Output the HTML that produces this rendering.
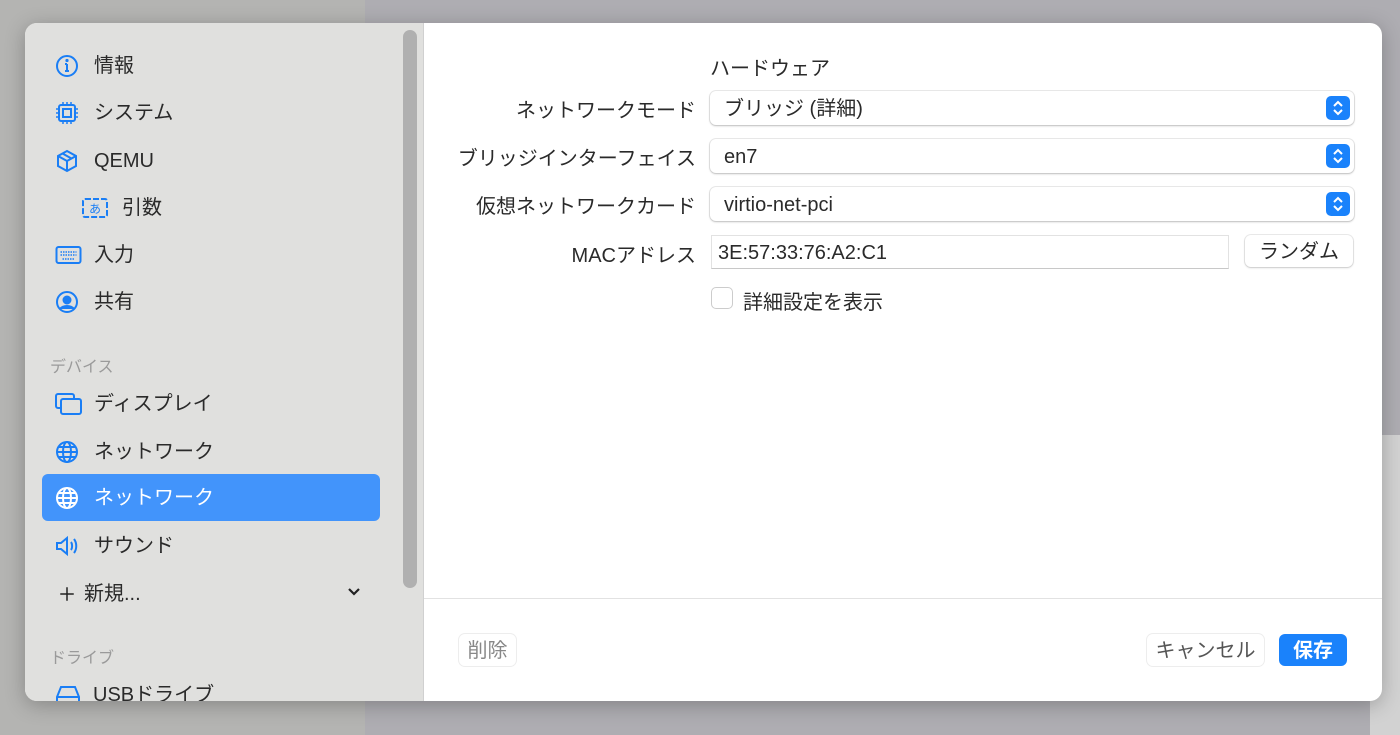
<!DOCTYPE html>
<html><head><meta charset="utf-8"><style>
*{margin:0;padding:0;box-sizing:border-box}
body{width:1400px;height:735px;overflow:hidden;position:relative;background:#aeadb2;font-family:"Liberation Sans","Noto Sans CJK JP",sans-serif;color:#2a2a2a}
.bgl{position:absolute;left:0;top:0;width:365px;height:735px;background:#b4b4b2}
.bgr{position:absolute;left:1370px;top:435px;width:30px;height:300px;background:#d2d2d2}
.dlg{position:absolute;left:25px;top:23px;width:1357px;height:678px;border-radius:12px;overflow:hidden;background:#fff;box-shadow:0 4px 20px rgba(0,0,0,.25)}
.side{position:absolute;left:0;top:0;width:399px;height:678px;background:#e0e0de;border-right:1px solid #d0d0d0}
.thumb{position:absolute;left:378px;top:7px;width:14px;height:558px;border-radius:7px;background:#b0b0b0}
.it{position:absolute;left:30px;font-size:20px;height:26px;line-height:26px;display:flex;align-items:center}
.it svg{width:24px;height:24px;margin-right:15px}
.sec{position:absolute;left:25px;font-size:16px;color:#9a9a9a}
.sel{position:absolute;left:17px;top:451px;width:338px;height:47px;background:#4294fb;border-radius:6px}
.lab{position:absolute;right:686px;font-size:20px;text-align:right;white-space:nowrap}
.pop{position:absolute;left:685px;width:644px;height:34px;border-radius:6px;background:#fff;box-shadow:0 0 0 1px rgba(0,0,0,.08),0 1px 2px rgba(0,0,0,.2);font-size:20px;line-height:36px;padding-left:14px}
.pop .ar{position:absolute;right:4px;top:5px;width:24px;height:24px;border-radius:5px;background:#1a82fb}
.btn{position:absolute;height:32px;border-radius:6px;background:#fff;box-shadow:0 0 0 1px rgba(0,0,0,.08),0 1px 2px rgba(0,0,0,.15);font-size:20px;line-height:34px;text-align:center}
</style></head><body>
<div class="bgl"></div><div class="bgr"></div>
<div class="dlg">
<div class="side">
<div class="thumb"></div>
<div class="sel"></div>
<div class="it" style="top:30px"><svg viewBox="0 0 24 24" fill="none" stroke="#1a7ef5" stroke-width="2"><circle cx="12" cy="12" r="10"/><path d="M12 10v7M10 17h4M10 10h2"/><circle cx="12" cy="6.5" r=".6" fill="#1a7ef5"/></svg>情報</div>
<div class="it" style="top:77px"><svg viewBox="0 0 24 24" fill="none" stroke="#1a7ef5" stroke-width="2"><rect x="4" y="4" width="16" height="16" rx="2"/><rect x="8" y="8" width="8" height="8"/><path d="M8 1v3M12 1v3M16 1v3M8 20v3M12 20v3M16 20v3M1 8h3M1 12h3M1 16h3M20 8h3M20 12h3M20 16h3" stroke-width="1.5"/></svg>システム</div>
<div class="it" style="top:125px"><svg viewBox="0 0 24 24" fill="none" stroke="#1a7ef5" stroke-width="2"><path d="M12 2l9 5v10l-9 5-9-5V7z M3 7l9 5 9-5M12 12v10M7.5 4.5l9 5"/></svg>QEMU</div>
<div class="it" style="top:172px;left:57px"><svg viewBox="0 0 26 20" style="width:26px;height:20px;margin-right:14px" fill="none" stroke="#1a7ef5" stroke-width="2" stroke-dasharray="6 2"><rect x="1" y="1" width="24" height="18" rx="2"/><text x="13" y="15" font-size="12" fill="#1a7ef5" stroke="none" text-anchor="middle" font-family="Noto Sans CJK JP">あ</text></svg>引数</div>
<div class="it" style="top:219px"><svg viewBox="0 0 26 18" style="width:27px;height:18px;margin-right:12px" fill="none" stroke="#1a7ef5" stroke-width="2"><rect x="1" y="1" width="24" height="16" rx="2"/><path d="M5 6h16M5 9h16M7 13h12" stroke-width="1.5" stroke-dasharray="1.5 1"/></svg>入力</div>
<div class="it" style="top:266px"><svg viewBox="0 0 24 24" fill="none" stroke="#1a7ef5" stroke-width="2"><circle cx="12" cy="12" r="10"/><circle cx="12" cy="10" r="3.5" fill="#1a7ef5"/><path d="M5 19c3-4 11-4 14 0" fill="#1a7ef5"/></svg>共有</div>
<div class="sec" style="top:330px">デバイス</div>
<div class="it" style="top:368px"><svg viewBox="0 0 27 24" style="width:27px;margin-right:12px" fill="none" stroke="#1a7ef5" stroke-width="2"><rect x="1" y="2" width="18" height="14" rx="2"/><rect x="6" y="7" width="20" height="15" rx="2" fill="#e0e0de"/></svg>ディスプレイ</div>
<div class="it" style="top:416px"><svg viewBox="0 0 24 24" fill="none" stroke="#1a7ef5" stroke-width="2"><circle cx="12" cy="12" r="10"/><ellipse cx="12" cy="12" rx="4" ry="10"/><path d="M2 12h20M4 7h16M4 17h16"/></svg>ネットワーク</div>
<div class="it" style="top:462px;color:#fff"><svg viewBox="0 0 24 24" fill="none" stroke="#fff" stroke-width="2"><circle cx="12" cy="12" r="10"/><ellipse cx="12" cy="12" rx="4" ry="10"/><path d="M2 12h20M4 7h16M4 17h16"/></svg>ネットワーク</div>
<div class="it" style="top:510px"><svg viewBox="0 0 24 24" fill="none" stroke="#1a7ef5" stroke-width="2"><path d="M2 9h4l6-5v16l-6-5H2z M16 8c1.5 2 1.5 6 0 8M19 5c3 4 3 10 0 14"/></svg>サウンド</div>
<div class="it" style="top:558px"><svg viewBox="0 0 24 24" style="width:18px;margin-right:8px;margin-left:3px" fill="none" stroke="#222" stroke-width="2"><path d="M12 3v18M3 12h18"/></svg>新規...</div>
<svg style="position:absolute;left:322px;top:564px" width="14" height="10" viewBox="0 0 14 10" fill="none" stroke="#222" stroke-width="2.2"><path d="M2 2l5 5 5-5"/></svg>
<div class="sec" style="top:621px">ドライブ</div>
<div class="it" style="top:659px"><svg viewBox="0 0 26 24" style="width:26px;margin-right:12px" fill="none" stroke="#1a7ef5" stroke-width="2"><path d="M2 14l4-10h14l4 10v7H2z M2 14h22"/></svg>USBドライブ</div>
</div>
<div style="position:absolute;left:685px;top:29px;font-size:20px">ハードウェア</div>
<div class="lab" style="top:71px">ネットワークモード</div>
<div class="lab" style="top:119px">ブリッジインターフェイス</div>
<div class="lab" style="top:167px">仮想ネットワークカード</div>
<div class="lab" style="top:216px">MACアドレス</div>
<div class="pop" style="top:68px">ブリッジ (詳細)<div class="ar"><svg width="24" height="24" viewBox="0 0 24 24" fill="none" stroke="#fff" stroke-width="2"><path d="M8 10l4-4 4 4M8 14l4 4 4-4"/></svg></div></div>
<div class="pop" style="top:116px">en7<div class="ar"><svg width="24" height="24" viewBox="0 0 24 24" fill="none" stroke="#fff" stroke-width="2"><path d="M8 10l4-4 4 4M8 14l4 4 4-4"/></svg></div></div>
<div class="pop" style="top:164px">virtio-net-pci<div class="ar"><svg width="24" height="24" viewBox="0 0 24 24" fill="none" stroke="#fff" stroke-width="2"><path d="M8 10l4-4 4 4M8 14l4 4 4-4"/></svg></div></div>
<div style="position:absolute;left:686px;top:212px;width:518px;height:34px;border:1px solid #e2e2e2;border-bottom-color:#c8c8c8;font-size:20px;line-height:34px;padding-left:6px">3E:57:33:76:A2:C1</div>
<div class="btn" style="left:1220px;top:212px;width:108px">ランダム</div>
<div style="position:absolute;left:686px;top:264px;width:22px;height:22px;border-radius:5px;border:1px solid #ccc;background:#fff"></div>
<div style="position:absolute;left:718px;top:263px;font-size:20px">詳細設定を表示</div>
<div style="position:absolute;left:399px;top:575px;width:958px;height:1px;background:#e2e2e2"></div>
<div class="btn" style="left:434px;top:611px;width:57px;color:#888;box-shadow:0 0 0 1px rgba(0,0,0,.07)">削除</div>
<div class="btn" style="left:1122px;top:611px;width:117px;color:#555;box-shadow:0 0 0 1px rgba(0,0,0,.07)">キャンセル</div>
<div class="btn" style="left:1254px;top:611px;width:68px;background:#1a82fb;color:#fff;font-weight:bold;box-shadow:none">保存</div>
</div>
</body></html>
